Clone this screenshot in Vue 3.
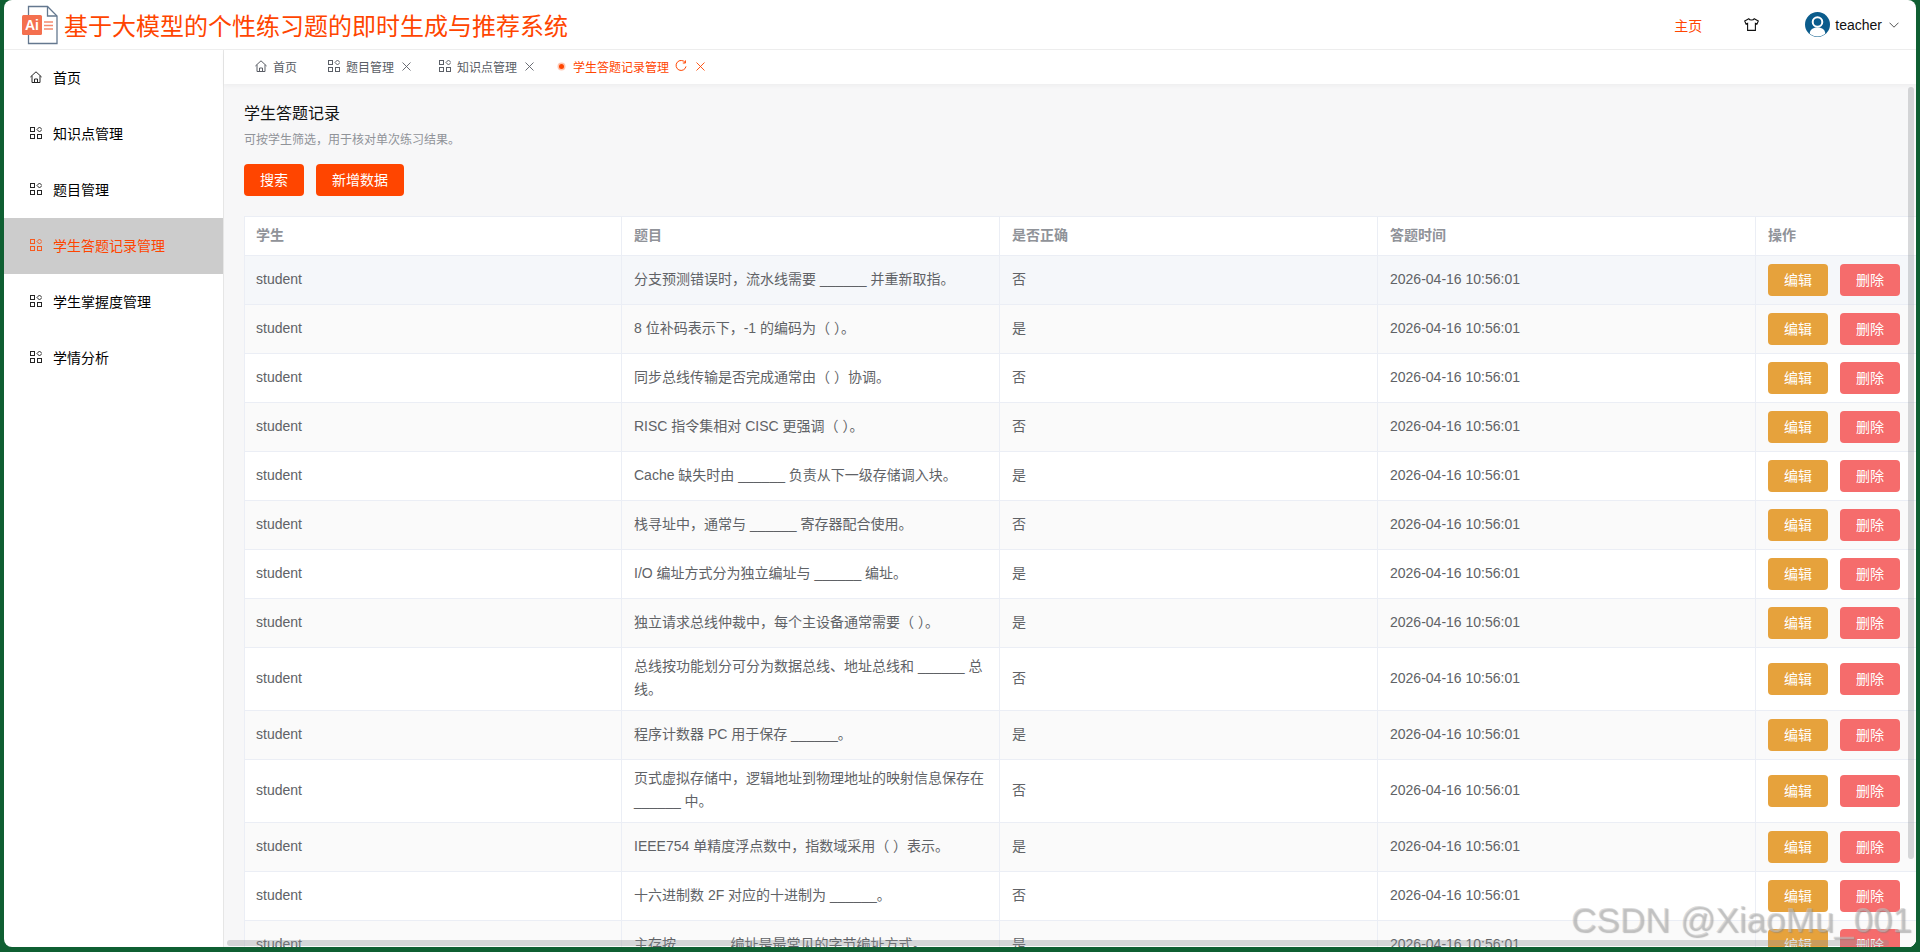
<template>
  <div class="window">
    <div class="shell">
      <header class="topbar">
        <svg class="logo" viewBox="0 0 36 40" width="36" height="40">
          <path d="M6.5 10V1.5H25.5L35 11V38.5H6.5V30" fill="#fff" stroke="#64788f" stroke-width="1.3" />
          <path d="M25.5 1.5V11H35" fill="none" stroke="#64788f" stroke-width="1.3" />
          <rect x="0" y="10" width="20" height="20" rx="1.5" fill="#f4704f" />
          <text x="10" y="25" text-anchor="middle" class="logo-ai">Ai</text>
          <path d="M22 17H31M22 20.5H31M22 24H31" stroke="#f58a70" stroke-width="1.4" />
        </svg>
        <span class="title">基于大模型的个性练习题的即时生成与推荐系统</span>
        <span class="nav-home">主页</span>
        <svg class="shirt" viewBox="0 0 15 13" width="15" height="13" fill="none" stroke="#111" stroke-width="1.1">
          <path d="M4.8 .7 L.7 3 L2 6 L3.6 5.4 V12.4 H11.4 V5.4 L13 6 L14.3 3 L10.2 .7 C9.6 2.4 5.4 2.4 4.8 .7Z" />
        </svg>
        <svg class="avatar" viewBox="0 0 25 25" width="25" height="25">
          <circle cx="12.5" cy="12.5" r="12.5" fill="#0b5c8c" />
          <circle cx="12.5" cy="10" r="4.8" fill="none" stroke="#fff" stroke-width="2" />
          <path d="M4.6 21.5C5.5 16.8 8.5 15.6 12.5 15.6S19.5 16.8 20.4 21.5C18.2 23.6 15.5 24.4 12.5 24.4S6.8 23.6 4.6 21.5Z" fill="#fff" />
        </svg>
        <span class="username">teacher</span>
        <svg class="chevron" viewBox="0 0 10 6" width="10" height="6" fill="none" stroke="#555" stroke-width="1">
          <path d="M.5 .7 L5 5.2 L9.5 .7" />
        </svg>
      </header>

      <div class="body">
        <aside class="sidebar">
          <div
            v-for="item in menu"
            :key="item.label"
            :class="['menu-item', { active: item.active }]"
          >
            <svg v-if="item.home" class="icon" viewBox="0 0 12 12" width="12" height="12" fill="none" stroke="currentColor" stroke-width="1">
              <path d="M.4 6 L6 .8 L11.6 6 M2 4.8 V11.5 H10 V4.8 M4.5 11.5 V8 H7.5 V11.5" />
            </svg>
            <svg v-else class="icon" viewBox="0 0 12 12" width="12" height="12" fill="none" stroke="currentColor" stroke-width="1">
              <rect x=".5" y=".5" width="4" height="4" />
              <path d="M9.5 0 L12 2.5 L9.5 5 L7 2.5Z" />
              <rect x=".5" y="7.5" width="4" height="4" />
              <rect x="7.5" y="7.5" width="4" height="4" />
            </svg>
            <span>{{ item.label }}</span>
          </div>
        </aside>

        <main class="main">
          <nav class="tabs">
            <div class="tab first">
              <svg class="icon" viewBox="0 0 12 12" width="12" height="12" fill="none" stroke="currentColor" stroke-width="1">
                <path d="M.4 6 L6 .8 L11.6 6 M2 4.8 V11.5 H10 V4.8 M4.5 11.5 V8 H7.5 V11.5" />
              </svg>
              <span>首页</span>
            </div>
            <div v-for="tab in closableTabs" :key="tab" class="tab">
              <svg class="icon" viewBox="0 0 12 12" width="12" height="12" fill="none" stroke="currentColor" stroke-width="1">
                <rect x=".5" y=".5" width="4" height="4" />
                <path d="M9.5 0 L12 2.5 L9.5 5 L7 2.5Z" />
                <rect x=".5" y="7.5" width="4" height="4" />
                <rect x="7.5" y="7.5" width="4" height="4" />
              </svg>
              <span>{{ tab }}</span>
              <svg class="close" viewBox="0 0 9 9" width="9" height="9" stroke="currentColor" stroke-width=".9">
                <path d="M.5 .5 L8.5 8.5 M8.5 .5 L.5 8.5" />
              </svg>
            </div>
            <div class="tab current">
              <i class="dot"></i>
              <span>学生答题记录管理</span>
              <svg class="refresh" viewBox="0 0 12 12" width="12" height="12" fill="none" stroke="currentColor" stroke-width="1">
                <path d="M10.2 2.6 A5 5 0 1 0 11 6.4" />
                <path d="M10.4 .4 V3 H7.8" />
              </svg>
              <svg class="close" viewBox="0 0 9 9" width="9" height="9" stroke="currentColor" stroke-width=".9">
                <path d="M.5 .5 L8.5 8.5 M8.5 .5 L.5 8.5" />
              </svg>
            </div>
          </nav>

          <div class="content">
            <h2 class="page-title">学生答题记录</h2>
            <p class="page-desc">可按学生筛选，用于核对单次练习结果。</p>
            <div class="toolbar">
              <button class="btn btn-primary">搜索</button>
              <button class="btn btn-primary">新增数据</button>
            </div>

            <table class="table">
              <colgroup>
                <col v-for="(w, i) in colWidths" :key="i" :width="w" />
              </colgroup>
              <thead>
                <tr>
                  <th v-for="col in columns" :key="col">{{ col }}</th>
                </tr>
              </thead>
              <tbody>
                <tr
                  v-for="(row, i) in rows"
                  :key="i"
                  :class="{ hover: i === 0, striped: i > 0 && i % 2 === 1 }"
                >
                  <td>student</td>
                  <td>{{ row.q }}</td>
                  <td>{{ row.ok }}</td>
                  <td>2026-04-16 10:56:01</td>
                  <td class="op-cell">
                    <div class="ops">
                      <button class="btn btn-warning">编辑</button>
                      <button class="btn btn-danger">删除</button>
                    </div>
                  </td>
                </tr>
              </tbody>
            </table>
          </div>

          <div class="bar bar-y"></div>
          <div class="bar bar-x"></div>
        </main>
      </div>
      <div class="watermark">CSDN @XiaoMu_001</div>
    </div>
  </div>
</template>

<script setup>
const menu = [
  { label: "首页", home: true },
  { label: "知识点管理" },
  { label: "题目管理" },
  { label: "学生答题记录管理", active: true },
  { label: "学生掌握度管理" },
  { label: "学情分析" },
];

const closableTabs = ["题目管理", "知识点管理"];

const columns = ["学生", "题目", "是否正确", "答题时间", "操作"];
const colWidths = [377, 378, 378, 378, 378];

const rows = [
  { q: "分支预测错误时，流水线需要 ______ 并重新取指。", ok: "否" },
  { q: "8 位补码表示下，-1 的编码为（ ）。", ok: "是" },
  { q: "同步总线传输是否完成通常由（ ）协调。", ok: "否" },
  { q: "RISC 指令集相对 CISC 更强调（ ）。", ok: "否" },
  { q: "Cache 缺失时由 ______ 负责从下一级存储调入块。", ok: "是" },
  { q: "栈寻址中，通常与 ______ 寄存器配合使用。", ok: "否" },
  { q: "I/O 编址方式分为独立编址与 ______ 编址。", ok: "是" },
  { q: "独立请求总线仲裁中，每个主设备通常需要（ ）。", ok: "是" },
  { q: "总线按功能划分可分为数据总线、地址总线和 ______ 总线。", ok: "否" },
  { q: "程序计数器 PC 用于保存 ______。", ok: "是" },
  { q: "页式虚拟存储中，逻辑地址到物理地址的映射信息保存在 ______ 中。", ok: "否" },
  { q: "IEEE754 单精度浮点数中，指数域采用（ ）表示。", ok: "是" },
  { q: "十六进制数 2F 对应的十进制为 ______。", ok: "否" },
  { q: "主存按 ______ 编址是最常见的字节编址方式。", ok: "是" },
];
</script>

<style>
html,
body {
  margin: 0;
  overflow: hidden;
}
</style>

<style scoped>
.window {
  width: 1920px;
  height: 952px;
  box-sizing: border-box;
  padding: 0 4px 5px;
  background: #0f5f32;
  font-family: "Liberation Sans", "Noto Sans CJK SC", sans-serif;
  font-size: 14px;
}

.shell {
  position: relative;
  height: 100%;
  background: #fff;
  border-radius: 8px;
  overflow: hidden;
  display: flex;
  flex-direction: column;
}

/* top bar */
.topbar {
  height: 49px;
  flex: none;
  display: flex;
  align-items: center;
  padding: 0 17px 0 18px;
  border-bottom: 1px solid #eee;
}

.logo {
  flex: none;
}

.logo-ai {
  font-size: 14px;
  font-weight: 700;
  fill: #fff;
}

.title {
  margin-left: 6px;
  font-size: 24px;
  color: #ff4500;
  white-space: nowrap;
}

.nav-home {
  margin-left: auto;
  color: #ff4500;
}

.shirt {
  margin-left: 42px;
}

.avatar {
  margin-left: 46px;
}

.username {
  margin-left: 5px;
  color: #111;
}

.chevron {
  margin-left: 7px;
}

.body {
  flex: 1;
  min-height: 0;
  display: flex;
}

/* side menu */
.sidebar {
  width: 219px;
  flex: none;
  border-right: 1px solid #e6e6e6;
}

.menu-item {
  height: 56px;
  box-sizing: border-box;
  display: flex;
  align-items: center;
  padding: 0 0 2px 26px;
  color: #000;
}

.menu-item span {
  margin-left: 11px;
}

.menu-item .icon {
  opacity: 0.85;
}

.menu-item.active {
  background: #ccc;
  color: #ff4500;
}

/* tabs */
.main {
  position: relative;
  flex: 1;
  min-width: 0;
  display: flex;
  flex-direction: column;
}

.tabs {
  height: 34px;
  box-sizing: border-box;
  flex: none;
  display: flex;
  align-items: center;
  padding: 0 0 2px 17px;
  background: #fff;
  box-shadow: 0 2px 4px rgba(0, 0, 0, 0.04);
  position: relative;
  font-size: 12px;
  color: #5a5e66;
}

.tab {
  display: flex;
  align-items: center;
  padding: 0 14px;
}

.tab.first {
  padding-right: 17px;
}

.tab > span {
  margin-left: 6px;
}

.tab .close {
  margin-left: 8px;
}

.tab.current {
  margin-left: -4px;
  color: #ff4500;
}

.tab.current > span {
  margin-left: 8px;
}

.tab.current .close {
  margin-left: 9px;
}

.refresh {
  margin-left: 6px;
}

.dot {
  width: 5px;
  height: 5px;
  margin: 0 1px;
  border-radius: 50%;
  background: #ff4500;
  box-shadow: 0 0 0 1.5px rgba(255, 69, 0, 0.3);
}

/* page */
.content {
  flex: 1;
  min-height: 0;
  overflow: hidden;
  background: #f7f7f8;
  padding: 20px 0 0 20px;
}

.page-title {
  margin: 0;
  font-size: 16px;
  font-weight: 400;
  line-height: 20px;
  color: #111;
}

.page-desc {
  margin: 6px 0 0;
  font-size: 12px;
  line-height: 20px;
  color: #909399;
}

.toolbar {
  margin-top: 14px;
  display: flex;
  gap: 12px;
}

.btn {
  height: 32px;
  padding: 0 16px 2px;
  border: none;
  border-radius: 4px;
  font-family: inherit;
  font-size: 14px;
  color: #fff;
}

.btn-primary {
  background: #ff4500;
}

.btn-warning {
  background: #e6a23c;
}

.btn-danger {
  background: #f56c6c;
}

/* table */
.table {
  margin-top: 20px;
  width: 1890px;
  table-layout: fixed;
  border-collapse: separate;
  border-spacing: 0;
  background: #fff;
  border-top: 1px solid #ebeef5;
  border-left: 1px solid #ebeef5;
  color: #606266;
}

.table th,
.table td {
  padding: 7px 12px 9px;
  line-height: 23px;
  text-align: left;
  vertical-align: middle;
  border-right: 1px solid #ebeef5;
  border-bottom: 1px solid #ebeef5;
}

.table th:first-child,
.table td:first-child {
  padding-left: 11px;
}

.table th {
  padding-bottom: 8px;
  font-weight: 600;
  color: #909399;
}

.table td.op-cell {
  padding: 8px 12px;
}

.table tr.hover td {
  background: #f5f7fa;
}

.table tr.striped td {
  background: #fafafa;
}

.ops {
  display: flex;
  gap: 12px;
}

/* scrollbars sit over the page */
.bar {
  position: absolute;
  border-radius: 4px;
  background: rgba(144, 147, 153, 0.35);
}

.bar-y {
  top: 37px;
  right: 2px;
  width: 6px;
  height: 772px;
}

.bar-x {
  left: 3px;
  right: 27px;
  bottom: 1px;
  height: 6px;
}

.watermark {
  position: absolute;
  right: 4px;
  bottom: 7px;
  font-size: 35px;
  line-height: 40px;
  white-space: nowrap;
  color: rgba(195, 195, 195, 0.55);
  text-shadow: 1px 1px 1px rgba(130, 130, 130, 0.5);
  pointer-events: none;
}
</style>
